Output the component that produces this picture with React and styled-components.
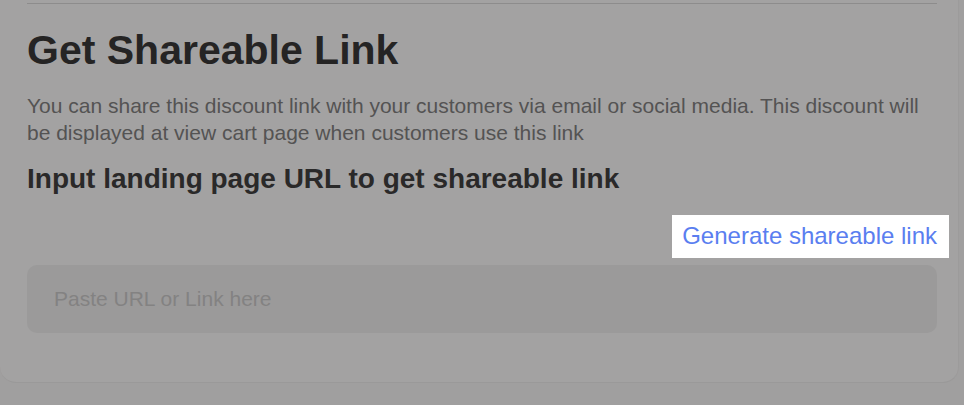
import React from "react";
import styled, { createGlobalStyle } from "styled-components";

const Global = createGlobalStyle`
  html, body {
    margin: 0;
    padding: 0;
    background: #a09f9f;
    font-family: "Liberation Sans", Arial, sans-serif;
  }
`;

const Card = styled.section`
  width: 959px;
  box-sizing: border-box;
  padding: 3px 21px 49px 27px;
  background: #a3a2a2;
  border-radius: 0 0 16px 16px;
  border-bottom: 1px solid #9a9999;
  border-right: 1px solid #9c9b9b;
`;

const Divider = styled.hr`
  margin: 0;
  border: none;
  height: 1px;
  background: #8d8c8c;
`;

const Title = styled.h1`
  margin: 23px 0 0;
  font-size: 41px;
  line-height: 47px;
  font-weight: 700;
  color: #252424;
`;

const Description = styled.p`
  margin: 18px 0 0;
  font-size: 21px;
  line-height: 27px;
  color: #545353;
`;

const SubTitle = styled.h2`
  margin: 17px 0 0;
  font-size: 28px;
  line-height: 32px;
  font-weight: 700;
  color: #2a2929;
`;

const ActionRow = styled.div`
  display: flex;
  justify-content: flex-end;
  align-items: flex-start;
  margin-top: 20px;
  margin-right: -12px;
`;

const LinkButton = styled.button`
  box-sizing: border-box;
  height: 43px;
  border: none;
  background: #ffffff;
  padding: 7px 12px 8px 10px;
  font-family: inherit;
  font-size: 24px;
  line-height: 28px;
  color: #5a7ef0;
  cursor: pointer;
`;

const UrlInput = styled.input`
  display: block;
  width: 100%;
  box-sizing: border-box;
  margin-top: 7px;
  height: 68px;
  padding: 0 27px;
  border: none;
  border-radius: 10px;
  background: #9b9a9a;
  font-family: inherit;
  font-size: 21px;
  color: #3a3939;
  outline: none;

  &::placeholder {
    color: #838282;
  }
`;

export default function App() {
  return (
    <>
      <Global />
      <Card>
        <Divider />
        <Title>Get Shareable Link</Title>
        <Description>
          You can share this discount link with your customers via email or social media. This discount will
          be displayed at view cart page when customers use this link
        </Description>
        <SubTitle>Input landing page URL to get shareable link</SubTitle>
        <ActionRow>
          <LinkButton>Generate shareable link</LinkButton>
        </ActionRow>
        <UrlInput placeholder="Paste URL or Link here" />
      </Card>
    </>
  );
}
